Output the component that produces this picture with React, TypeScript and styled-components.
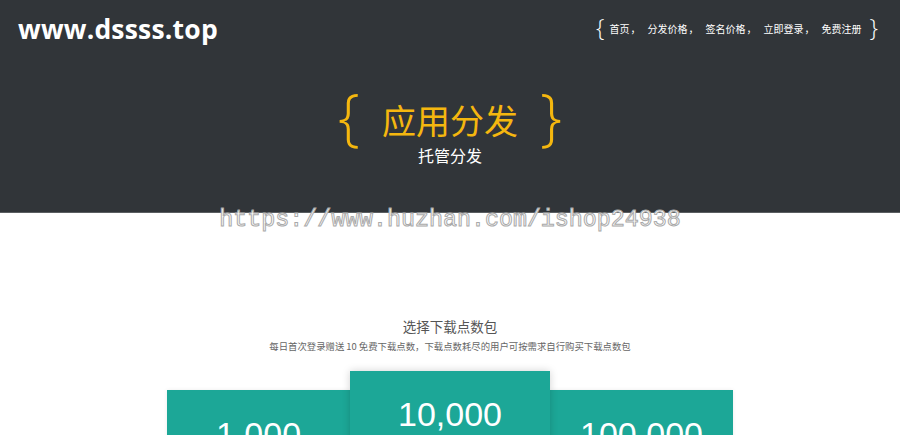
import React from "react";
import styled, { createGlobalStyle } from "styled-components";

const Global = createGlobalStyle`
  html, body { margin: 0; padding: 0; overflow: hidden; background: #fff; }
  body { font-family: "Open Sans", "Noto Sans CJK SC", sans-serif; }
  * { box-sizing: border-box; }
`;

const Page = styled.div`
  position: relative;
  width: 900px;
  min-height: 435px;
`;

const Header = styled.header`
  background: #313539;
  height: 213px;
  border-bottom: 1px solid #5a5e61;
  display: flex;
  flex-direction: column;
`;

const TopBar = styled.div`
  display: flex;
  justify-content: space-between;
  align-items: center;
  height: 56px;
  padding: 0 22px 0 18px;
`;

const Logo = styled.div`
  color: #fff;
  font-family: "Open Sans", sans-serif;
  font-weight: 700;
  font-size: 26.5px;
  letter-spacing: 0.2px;
  margin-top: 1px;
`;

const Nav = styled.nav`
  display: flex;
  align-items: center;
  color: #fff;
  font-family: "Noto Sans CJK SC", sans-serif;
  font-size: 10px;
`;

const NavBrace = styled.span<{ $side: "l" | "r" }>`
  font-family: "Open Sans", sans-serif;
  font-weight: 300;
  font-size: 24px;
  line-height: 1;
  margin: ${(p) => (p.$side === "l" ? "0 5px 0 0" : "0 0 0 8px")};
  transform: translateY(-1px);
`;

const NavItem = styled.a`
  color: #fff;
  text-decoration: none;
  display: flex;
  align-items: center;
`;

const Comma = styled.span`
  width: 18px;
  padding-left: 1px;
`;

const Hero = styled.div`
  display: flex;
  flex-direction: column;
  align-items: center;
  margin-top: 33px;
`;

const TitleRow = styled.div`
  display: flex;
  align-items: center;
  color: #f5b70f;
`;

const HeroBrace = styled.span`
  font-family: "Open Sans", sans-serif;
  font-weight: 300;
  font-size: 62px;
  line-height: 62px;
  transform: translateY(-5px);
`;

const Title = styled.h1`
  margin: 0 22px;
  font-family: "Noto Sans CJK SC", sans-serif;
  font-weight: 400;
  font-size: 34px;
  line-height: 50px;
`;

const Subtitle = styled.div`
  color: #fff;
  font-family: "Noto Sans CJK SC", sans-serif;
  font-size: 16px;
  line-height: 20px;
  margin-top: -6px;
`;

const Watermark = styled.div`
  position: absolute;
  top: 203px;
  left: 0;
  width: 900px;
  text-align: center;
  font-family: "Liberation Mono", monospace;
  font-size: 23.3px;
  line-height: 34px;
  color: #fff;
  -webkit-text-stroke: 1px #a9a9a9;
  pointer-events: none;
`;

const Section = styled.section`
  display: flex;
  flex-direction: column;
  align-items: center;
  padding-top: 103px;
`;

const SectionTitle = styled.h2`
  margin: 0;
  font-family: "Noto Sans CJK SC", sans-serif;
  font-weight: 400;
  font-size: 13.5px;
  line-height: 20px;
  color: #555;
`;

const SectionDesc = styled.p`
  margin: 3px 0 0;
  font-family: "Noto Sans CJK SC", sans-serif;
  font-size: 9.4px;
  line-height: 14px;
  color: #666;
`;

const Cards = styled.div`
  display: flex;
  align-items: flex-start;
  margin-top: 18px;
`;

const Card = styled.div<{ $featured?: boolean }>`
  background: #1ca797;
  width: ${(p) => (p.$featured ? "200px" : "183px")};
  height: 140px;
  margin-top: ${(p) => (p.$featured ? "0" : "19px")};
  box-shadow: ${(p) => (p.$featured ? "0 0 8px rgba(0,0,0,0.18)" : "0 0 4px rgba(0,0,0,0.08)")};
  position: relative;
  z-index: ${(p) => (p.$featured ? 2 : 1)};
  display: flex;
  justify-content: center;
`;

const Amount = styled.div<{ $featured?: boolean }>`
  color: #fff;
  font-family: "Liberation Sans", Arial, sans-serif;
  font-weight: 400;
  font-size: 34px;
  line-height: 40px;
  margin-top: ${(p) => (p.$featured ? "23px" : "24px")};
`;

const navItems = ["首页", "分发价格", "签名价格", "立即登录", "免费注册"];

export default function App() {
  return (
    <Page>
      <Global />
      <Header>
        <TopBar>
          <Logo>www.dssss.top</Logo>
          <Nav>
            <NavBrace $side="l">{"{"}</NavBrace>
            {navItems.map((t, i) => (
              <NavItem key={t} href="#">
                {t}
                {i < navItems.length - 1 && <Comma>，</Comma>}
              </NavItem>
            ))}
            <NavBrace $side="r">{"}"}</NavBrace>
          </Nav>
        </TopBar>
        <Hero>
          <TitleRow>
            <HeroBrace>{"{"}</HeroBrace>
            <Title>应用分发</Title>
            <HeroBrace>{"}"}</HeroBrace>
          </TitleRow>
          <Subtitle>托管分发</Subtitle>
        </Hero>
      </Header>
      <Watermark>https://www.huzhan.com/ishop24938</Watermark>
      <Section>
        <SectionTitle>选择下载点数包</SectionTitle>
        <SectionDesc>每日首次登录赠送 10 免费下载点数，下载点数耗尽的用户可按需求自行购买下载点数包</SectionDesc>
        <Cards>
          <Card>
            <Amount>1,000</Amount>
          </Card>
          <Card $featured>
            <Amount $featured>10,000</Amount>
          </Card>
          <Card>
            <Amount>100,000</Amount>
          </Card>
        </Cards>
      </Section>
    </Page>
  );
}
